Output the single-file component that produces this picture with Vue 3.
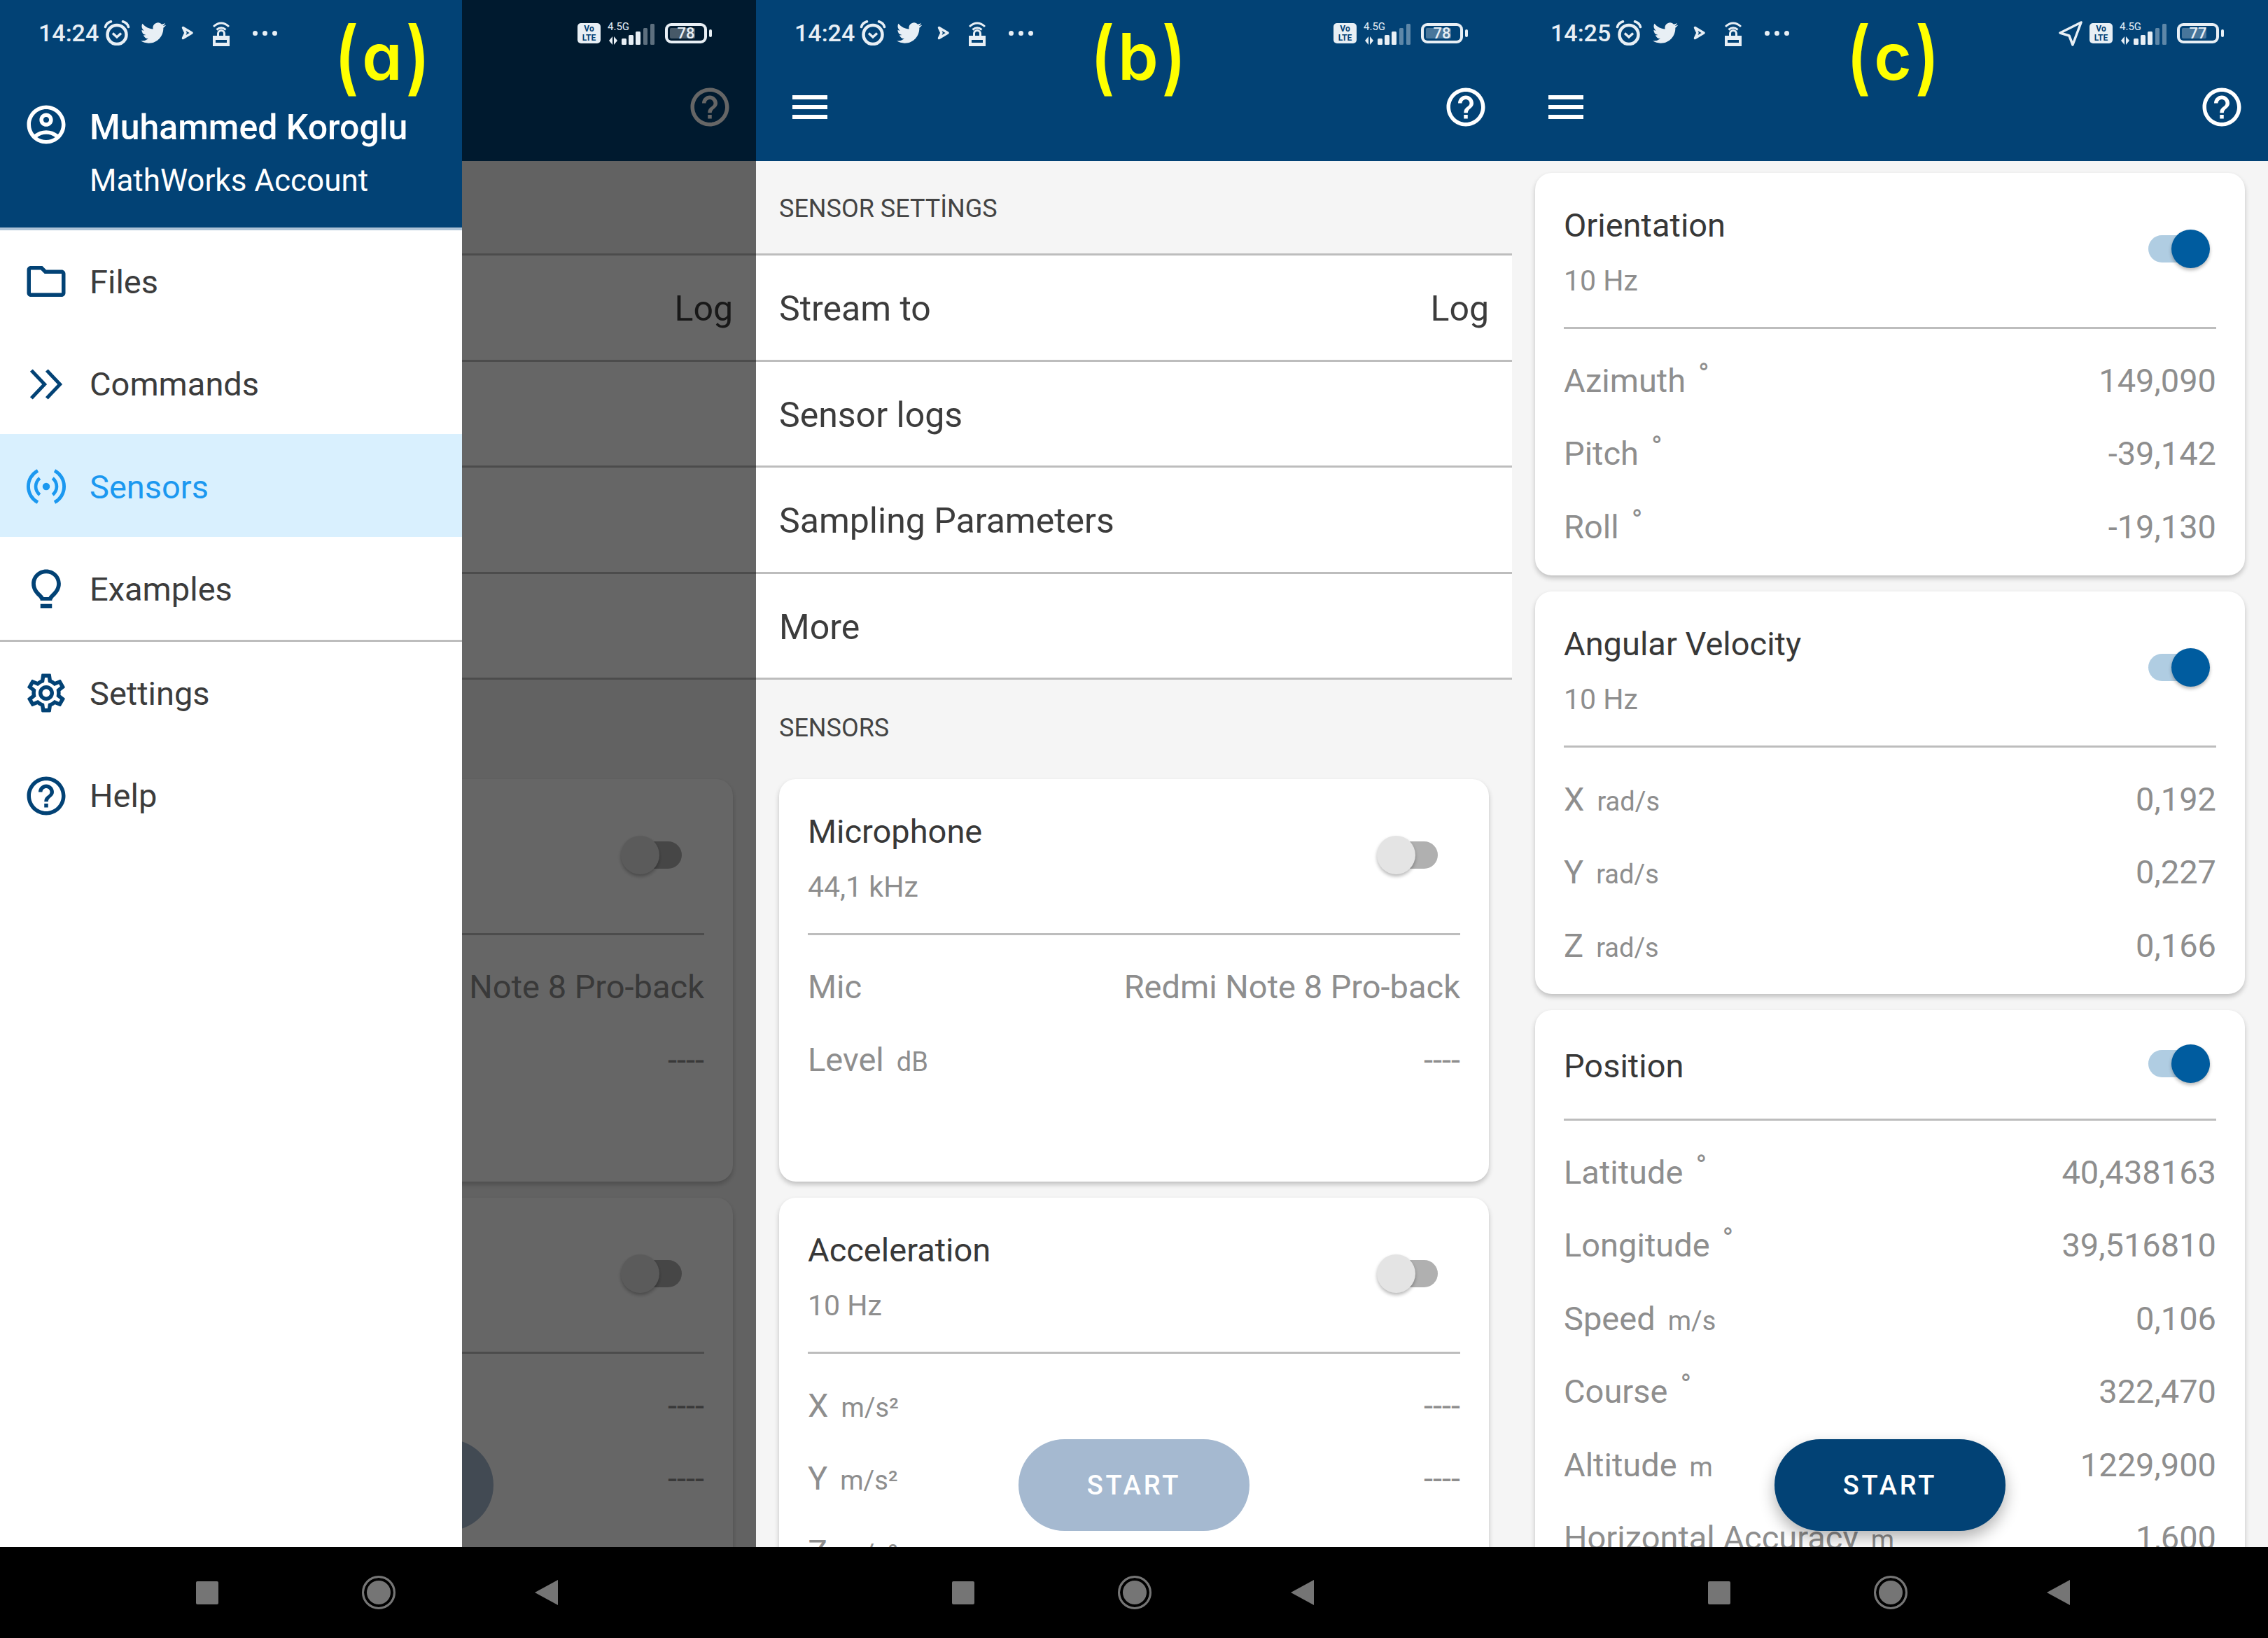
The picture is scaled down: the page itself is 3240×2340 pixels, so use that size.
<script setup>
const help = 'M11 18h2v-2h-2v2zm1-16C6.48 2 2 6.48 2 12s4.48 10 10 10 10-4.48 10-10S17.52 2 12 2zm0 18c-4.41 0-8-3.59-8-8s3.59-8 8-8 8 3.59 8 8-3.59 8-8 8zm0-14c-2.21 0-4 1.79-4 4h2c0-1.1.9-2 2-2s2 .9 2 2c0 2-3 1.75-3 5h2c0-2.25 3-2.5 3-5 0-2.21-1.79-4-4-4z'
const account = 'M12 2C6.48 2 2 6.48 2 12s4.48 10 10 10 10-4.48 10-10S17.52 2 12 2zM7.35 18.5C8.66 17.56 10.26 17 12 17s3.34.56 4.65 1.5c-1.31.94-2.91 1.5-4.65 1.5s-3.34-.56-4.65-1.5zm10.79-1.38C16.45 15.8 14.32 15 12 15s-4.45.8-6.14 2.12C4.7 15.73 4 13.95 4 12c0-4.42 3.58-8 8-8s8 3.58 8 8c0 1.95-.7 3.73-1.86 5.12zM12 6c-1.93 0-3.5 1.57-3.5 3.5S10.07 13 12 13s3.5-1.57 3.5-3.5S13.93 6 12 6zm0 5c-.83 0-1.5-.67-1.5-1.5S11.17 8 12 8s1.5.67 1.5 1.5S12.83 11 12 11z'
const twitter = 'M23.953 4.57a10 10 0 01-2.825.775 4.958 4.958 0 002.163-2.723c-.951.555-2.005.959-3.127 1.184a4.92 4.92 0 00-8.384 4.482C7.69 8.095 4.067 6.13 1.64 3.162a4.822 4.822 0 00-.666 2.475c0 1.71.87 3.213 2.188 4.096a4.904 4.904 0 01-2.228-.616v.06a4.923 4.923 0 003.946 4.827 4.996 4.996 0 01-2.212.085 4.936 4.936 0 004.604 3.417 9.867 9.867 0 01-6.102 2.105c-.39 0-.779-.023-1.17-.067a13.995 13.995 0 007.557 2.209c9.053 0 13.998-7.496 13.998-13.985 0-.21 0-.42-.015-.63A9.935 9.935 0 0024 4.59z'

const menu = [
  { label: 'Files', d: 'M9.17 6l2 2H20v10H4V6h5.17M10 4H4c-1.1 0-1.99.9-1.99 2L2 18c0 1.1.9 2 2 2h16c1.1 0 2-.9 2-2V8c0-1.1-.9-2-2-2h-8l-2-2z' },
  { label: 'Commands', d: 'M5 4.2L3.6 5.4 9.9 12l-6.300 6.600L5 19.800 12.400 12zM13 4.200l-1.400 1.200 6.300 6.600-6.300 6.600 1.400 1.200 7.400-7.800z' },
  { label: 'Sensors', active: true, d: 'M7.21 3A10.2 10.2 0 0 0 7.21 21L8.06 19.42A8.4 8.4 0 0 1 8.06 4.58zM16.79 3A10.2 10.2 0 0 1 16.79 21L15.94 19.42A8.4 8.4 0 0 0 15.94 4.58zM8.12 7.04A6.3 6.3 0 0 0 8.12 16.96L9.17 15.62A4.6 4.6 0 0 1 9.17 8.38zM15.88 7.04A6.3 6.3 0 0 1 15.88 16.96L14.83 15.62A4.6 4.6 0 0 0 14.83 8.38zM12 10.1a1.9 1.9 0 1 0 0 3.8a1.9 1.9 0 1 0 0-3.8z' },
  { label: 'Examples', divider: true, d: 'M12 1.600c-4.200 0-7.600 3.300-7.600 7.400 0 2.900 1.500 5 3.200 6.600.900.800 1.400 1.500 1.400 2.200h6c0-.700.500-1.400 1.400-2.200 1.700-1.600 3.200-3.700 3.200-6.600 0-4.100-3.400-7.400-7.600-7.400zm0 2.100c3.100 0 5.500 2.300 5.500 5.300 0 2.100-1.100 3.700-2.600 5.100-.700.700-1.300 1.300-1.600 1.900h-2.600c-.300-.600-.900-1.200-1.600-1.900C7.600 12.700 6.500 11.100 6.500 9c0-3 2.400-5.300 5.500-5.300zM9 19.500h6v2.300H9z' },
  { label: 'Settings', d: 'M19.43 12.98c.04-.32.07-.64.07-.98 0-.34-.03-.66-.07-.98l2.11-1.65c.19-.15.24-.42.12-.64l-2-3.46c-.09-.16-.26-.25-.44-.25-.06 0-.12.01-.17.03l-2.49 1c-.52-.4-1.08-.73-1.69-.98l-.38-2.65C14.46 2.18 14.25 2 14 2h-4c-.25 0-.46.18-.49.42l-.38 2.65c-.61.25-1.17.59-1.69.98l-2.49-1c-.06-.02-.12-.03-.18-.03-.17 0-.34.09-.43.25l-2 3.46c-.13.22-.07.49.12.64l2.11 1.65c-.04.32-.07.65-.07.98 0 .33.03.66.07.98l-2.11 1.65c-.19.15-.24.42-.12.64l2 3.46c.09.16.26.25.44.25.06 0 .12-.01.17-.03l2.49-1c.52.4 1.08.73 1.69.98l.38 2.65c.03.24.24.42.49.42h4c.25 0 .46-.18.49-.42l.38-2.65c.61-.25 1.17-.59 1.69-.98l2.49 1c.06.02.12.03.18.03.17 0 .34-.09.43-.25l2-3.46c.12-.22.07-.49-.12-.64l-2.11-1.65zm-1.98-1.71c.04.31.05.52.05.73 0 .21-.02.43-.05.73l-.14 1.13.89.7 1.08.84-.7 1.21-1.27-.51-1.04-.42-.9.68c-.43.32-.84.56-1.25.73l-1.06.43-.16 1.13-.2 1.35h-1.4l-.19-1.35-.16-1.13-1.06-.43c-.43-.18-.83-.41-1.23-.71l-.91-.7-1.06.43-1.27.51-.7-1.21 1.08-.84.89-.7-.14-1.13c-.03-.31-.05-.54-.05-.74s.02-.43.05-.73l.14-1.13-.89-.7-1.08-.84.7-1.21 1.27.51 1.04.42.9-.68c.43-.32.84-.56 1.25-.73l1.06-.43.16-1.13.2-1.35h1.39l.19 1.35.16 1.13 1.06.43c.43.18.83.41 1.23.71l.91.7 1.06-.43 1.27-.51.7 1.21-1.07.85-.89.7.14 1.13zM12 8c-2.21 0-4 1.79-4 4s1.79 4 4 4 4-1.79 4-4-1.79-4-4-4zm0 6c-1.1 0-2-.9-2-2s.9-2 2-2 2 .9 2 2-.9 2-2 2z' },
  { label: 'Help', d: help }
]

const settings = [
  { label: 'Stream to', value: 'Log' },
  { label: 'Sensor logs' },
  { label: 'Sampling Parameters' },
  { label: 'More' }
]

const offCards = [
  {
    title: 'Microphone',
    sub: '44,1 kHz',
    on: false,
    rows: [
      { label: 'Mic', value: 'Redmi Note 8 Pro-back' },
      { label: 'Level', unit: 'dB', value: '----' }
    ]
  },
  {
    title: 'Acceleration',
    sub: '10 Hz',
    on: false,
    rows: [
      { label: 'X', unit: 'm/s²', value: '----' },
      { label: 'Y', unit: 'm/s²', value: '----' },
      { label: 'Z', unit: 'm/s²', value: '----' }
    ]
  }
]

const onCards = [
  {
    title: 'Orientation',
    sub: '10 Hz',
    on: true,
    rows: [
      { label: 'Azimuth', unit: '°', value: '149,090' },
      { label: 'Pitch', unit: '°', value: '-39,142' },
      { label: 'Roll', unit: '°', value: '-19,130' }
    ]
  },
  {
    title: 'Angular Velocity',
    sub: '10 Hz',
    on: true,
    rows: [
      { label: 'X', unit: 'rad/s', value: '0,192' },
      { label: 'Y', unit: 'rad/s', value: '0,227' },
      { label: 'Z', unit: 'rad/s', value: '0,166' }
    ]
  },
  {
    title: 'Position',
    on: true,
    rows: [
      { label: 'Latitude', unit: '°', value: '40,438163' },
      { label: 'Longitude', unit: '°', value: '39,516810' },
      { label: 'Speed', unit: 'm/s', value: '0,106' },
      { label: 'Course', unit: '°', value: '322,470' },
      { label: 'Altitude', unit: 'm', value: '1229,900' },
      { label: 'Horizontal Accuracy', unit: 'm', value: '1,600' }
    ]
  }
]

const panels = [
  { id: 'a', time: '14:24', battery: 78, drawer: true, settings, cards: offCards, running: false },
  { id: 'b', time: '14:24', battery: 78, settings, cards: offCards, running: false },
  { id: 'c', time: '14:25', battery: 77, location: true, settings: [], cards: onCards, running: true }
]
</script>

<template>
  <div class="shots">
    <div v-for="p in panels" :key="p.id" class="phone">
      <div class="screen">
        <header class="appbar">
          <svg class="burger" viewBox="0 0 50 34"><path d="M0 0h50v6H0zM0 14h50v6H0zM0 28h50v6H0z" /></svg>
          <svg class="icon" viewBox="0 0 24 24"><path :d="help" /></svg>
        </header>

        <main class="content" :class="{ tight: !p.settings.length }">
          <template v-if="p.settings.length">
            <div class="section first">SENSOR SETTİNGS</div>
            <div v-for="s in p.settings" :key="s.label" class="setting">
              <span>{{ s.label }}</span>
              <span v-if="s.value">{{ s.value }}</span>
            </div>
            <div class="section">SENSORS</div>
          </template>

          <section v-for="c in p.cards" :key="c.title" class="card">
            <div class="card-head" :class="{ single: !c.sub }">
              <div class="card-titles">
                <div class="card-title">{{ c.title }}</div>
                <div v-if="c.sub" class="card-sub">{{ c.sub }}</div>
              </div>
              <div class="toggle" :class="{ on: c.on }">
                <span class="track"></span>
                <span class="thumb"></span>
              </div>
            </div>
            <div class="card-rule"></div>
            <div class="rows">
              <div v-for="r in c.rows" :key="r.label" class="row">
                <span class="row-label">{{ r.label }}<small v-if="r.unit" :class="{ deg: r.unit === '°' }">{{ r.unit }}</small></span>
                <span>{{ r.value }}</span>
              </div>
            </div>
          </section>
        </main>

        <button class="fab" :class="{ running: p.running }">START</button>

        <template v-if="p.drawer">
          <div class="scrim"></div>
          <aside class="drawer">
            <div class="drawer-head">
              <div class="drawer-user">
                <svg class="icon" viewBox="0 0 24 24"><path :d="account" /></svg>
                <span>Muhammed Koroglu</span>
              </div>
              <div class="drawer-account">MathWorks Account</div>
            </div>
            <nav class="drawer-nav">
              <div v-for="m in menu" :key="m.label" class="drawer-wrap" :class="{ divided: m.divider }">
                <div class="drawer-item" :class="{ active: m.active }">
                  <svg class="icon" viewBox="0 0 24 24"><path :d="m.d" /></svg>
                  <span>{{ m.label }}</span>
                </div>
              </div>
            </nav>
          </aside>
        </template>

        <div class="status">
          <span class="time">{{ p.time }}</span>
          <svg class="st-alarm" viewBox="0 0 38 36" fill="none" stroke="currentColor">
            <circle cx="19" cy="20.500" r="13.500" stroke-width="4.500" />
            <path d="M2.500 9.500C3.500 5.500 6.500 3 10.500 1.800M35.500 9.500C34.500 5.500 31.500 3 27.500 1.800" stroke-width="3.500" stroke-linecap="round" />
            <path d="M13 18.500l6 5.500 6-5.500" stroke-width="3.500" />
          </svg>
          <svg class="st-bird" viewBox="0 0 24 24"><path :d="twitter" /></svg>
          <svg class="st-play" viewBox="0 0 18 20" fill="none" stroke="currentColor">
            <path d="M2.500 2.500L15 10 2.500 17.500 6 10z" stroke-width="3.500" stroke-linejoin="round" />
          </svg>
          <svg class="st-lock" viewBox="0 0 26 37" fill="none" stroke="currentColor">
            <path d="M2 9Q13-1 24 9M6.500 13.500Q13 8 19.500 13.500" stroke-width="3" />
            <path d="M8.500 22v-3a4.500 4.500 0 0 1 9 0v3" stroke-width="3" />
            <path d="M1 22h24v15H1zM5 28v4h16v-4z" fill="currentColor" stroke="none" fill-rule="evenodd" />
          </svg>
          <span class="st-dots"><i></i><i></i><i></i></span>

          <span class="st-right">
            <svg v-if="p.location" class="st-nav" viewBox="0 0 36 37" fill="none" stroke="currentColor">
              <path d="M33 3L3 18l13 4 5 13z" stroke-width="3.500" stroke-linejoin="round" />
            </svg>
            <span class="volte">Vo<br />LTE</span>
            <svg class="st-signal" viewBox="0 0 68 34">
              <text x="0" y="13" class="net">4.5G</text>
              <path d="M2 28l5-6v12zM9 22l5 6-5 6z" fill="currentColor" />
              <rect x="20" y="25" width="7" height="9" rx="1.500" fill="currentColor" />
              <rect x="30" y="20" width="7" height="14" rx="1.500" fill="currentColor" />
              <rect x="40" y="15" width="7" height="19" rx="1.500" fill="currentColor" />
              <rect x="51" y="10" width="6" height="24" rx="1.500" fill="currentColor" opacity="0.4" />
              <rect x="61" y="4" width="6" height="30" rx="1.500" fill="currentColor" opacity="0.4" />
            </svg>
            <span class="battery">
              <span class="battery-fill" :style="{ width: p.battery + '%' }"></span>
              <span class="battery-num">{{ p.battery }}</span>
            </span>
            <span class="battery-tip"></span>
          </span>
        </div>

        <div class="tag"><span class="paren">(</span>{{ p.id }}<span class="paren">)</span></div>
      </div>

      <footer class="navbar">
        <span class="nav-square"></span>
        <span class="nav-home"></span>
        <span class="nav-back"></span>
      </footer>
    </div>
  </div>
</template>

<style>
body {
  margin: 0;
  background: #000;
}
</style>

<style scoped>
.shots {
  display: flex;
  width: 3240px;
  height: 2340px;
  font-family: Roboto, "Liberation Sans", sans-serif;
}

.phone {
  width: 1080px;
  height: 2340px;
  display: flex;
  flex-direction: column;
}

.screen {
  position: relative;
  flex: 1;
  overflow: hidden;
  background: #f5f5f5;
}

.appbar {
  height: 230px;
  box-sizing: border-box;
  padding: 76px 33px 0 52px;
  display: flex;
  align-items: center;
  justify-content: space-between;
  background: #024275;
  color: #fff;
}

.burger {
  width: 50px;
  height: 34px;
  fill: currentColor;
}

.icon {
  width: 66px;
  height: 66px;
  flex: none;
  fill: currentColor;
}

.content.tight {
  padding-top: 17px;
}

.section {
  height: 142px;
  padding-bottom: 4px;
  box-sizing: border-box;
  display: flex;
  align-items: center;
  padding-left: 33px;
  font-size: 36px;
  color: #444;
}

.section.first {
  height: 135px;
  padding-top: 4px;
  padding-bottom: 0;
  border-bottom: 3px solid #bdbdbd;
}

.setting {
  height: 151.500px;
  box-sizing: border-box;
  padding: 4px 33px 0;
  display: flex;
  align-items: center;
  justify-content: space-between;
  background: #fff;
  border-bottom: 3px solid #bdbdbd;
  font-size: 50px;
  color: #3c3c3c;
}

.card {
  margin: 0 33px 23px;
  min-height: 575px;
  border-radius: 24px;
  background: #fff;
  box-shadow: 0 4px 7px rgba(0, 0, 0, 0.22);
}

.card-head {
  height: 220px;
  padding: 0 50px 0 41px;
  display: flex;
  align-items: center;
  justify-content: space-between;
}

.card-head.single {
  height: 155px;
}

.card-titles {
  display: flex;
  flex-direction: column;
  gap: 19px;
  padding-top: 8px;
}

.card-head.single .card-titles {
  padding-top: 5px;
}

.card-title {
  line-height: 60px;
  font-size: 47px;
  color: #383838;
}

.card-sub {
  line-height: 60px;
  font-size: 41px;
  color: #8e8e8e;
}

.toggle {
  position: relative;
  width: 110px;
  height: 55px;
  margin-top: -3px;
}

.track {
  position: absolute;
  left: 22px;
  top: 8px;
  width: 65px;
  height: 39px;
  border-radius: 20px;
  background: #b0b0b0;
}

.thumb {
  position: absolute;
  left: 0;
  top: 0;
  width: 55px;
  height: 55px;
  border-radius: 50%;
  background: #e4e4e4;
  box-shadow: 0 3px 5px rgba(0, 0, 0, 0.28);
}

.toggle.on .track {
  background: #b0cde2;
}

.toggle.on .thumb {
  left: 55px;
  background: #005c9f;
}

.card-rule {
  height: 3px;
  margin: 0 41px;
  background: #bdbdbd;
}

.rows {
  padding: 21px 41px 15px;
}

.row {
  height: 104.500px;
  display: flex;
  align-items: center;
  justify-content: space-between;
  font-size: 47px;
  color: #8e8e8e;
}

.row-label small {
  margin-left: 18px;
  font-size: 38px;
}

.row-label small.deg {
  position: relative;
  top: -11px;
  font-size: 42px;
}

.fab {
  position: absolute;
  left: 375px;
  top: 2056px;
  width: 330px;
  height: 131px;
  padding: 0;
  border: none;
  border-radius: 66px;
  background: #a5b9d0;
  color: #fff;
  font-family: inherit;
  font-size: 38px;
  font-weight: 500;
  letter-spacing: 3.800px;
}

.fab.running {
  background: #024275;
  box-shadow: 0 10px 22px rgba(0, 0, 0, 0.3);
}

.scrim {
  position: absolute;
  inset: 0;
  background: rgba(0, 0, 0, 0.6);
}

.drawer {
  position: absolute;
  left: 0;
  top: 0;
  bottom: 0;
  width: 660px;
  background: #fff;
}

.drawer-head {
  height: 325px;
  box-sizing: border-box;
  padding-top: 147px;
  background: #024275;
  color: #fff;
  box-shadow: 0 4px 0 #adc2d6;
}

.drawer-user {
  height: 70px;
  padding-left: 33px;
  display: flex;
  align-items: center;
  gap: 29px;
  font-size: 50px;
  font-weight: 500;
}

.drawer-user .icon {
  margin-top: -8px;
}

.drawer-account {
  margin: 6px 0 0 128px;
  line-height: 70px;
  font-size: 44px;
}

.drawer-nav {
  padding-top: 2px;
}

.drawer-wrap.divided {
  border-bottom: 3px solid #bdbdbd;
  padding-bottom: 1px;
  margin-bottom: -2px;
}

.drawer-item {
  height: 146.500px;
  box-sizing: border-box;
  padding: 4px 0 0 33px;
  display: flex;
  align-items: center;
  gap: 29px;
  font-size: 47px;
  color: #3c3c3c;
}

.drawer-item .icon {
  color: #024275;
}

.drawer-item.active {
  background: #d9f0fe;
  color: #1b98f0;
}

.drawer-item.active .icon {
  color: #1b98f0;
}

.status {
  position: absolute;
  left: 0;
  right: 0;
  top: 0;
  height: 94px;
  box-sizing: border-box;
  padding: 0 63px 0 55px;
  display: flex;
  align-items: center;
  color: #e8eff5;
}

.time {
  width: 85px;
  font-size: 34px;
  font-weight: 500;
  white-space: nowrap;
}

.status svg {
  flex: none;
}

.st-alarm {
  width: 38px;
  height: 36px;
  margin-left: 8px;
}

.st-bird {
  width: 36px;
  height: 36px;
  margin-left: 15px;
  fill: currentColor;
}

.st-play {
  width: 18px;
  height: 20px;
  margin-left: 22px;
}

.st-lock {
  width: 26px;
  height: 37px;
  margin-left: 26px;
}

.st-dots {
  margin-left: 32px;
  display: flex;
  gap: 7px;
}

.st-dots i {
  width: 7px;
  height: 7px;
  border-radius: 50%;
  background: currentColor;
}

.st-right {
  margin-left: auto;
  display: flex;
  align-items: center;
}

.st-nav {
  width: 36px;
  height: 37px;
  margin-right: 9px;
}

.volte {
  width: 33px;
  height: 29px;
  border-radius: 5px;
  background: #e8eff5;
  color: #024275;
  font-size: 12px;
  font-weight: 700;
  line-height: 13px;
  text-align: center;
  padding-top: 2px;
  box-sizing: border-box;
}

.st-signal {
  width: 68px;
  height: 34px;
  margin-left: 10px;
}

.net {
  font-size: 15px;
  fill: currentColor;
}

.battery {
  position: relative;
  width: 60px;
  height: 29px;
  margin-left: 14px;
  padding: 3px;
  box-sizing: border-box;
  border: 4px solid currentColor;
  border-radius: 9px;
  display: block;
}

.battery-fill {
  display: block;
  height: 100%;
  border-radius: 2px;
  background: rgba(255, 255, 255, 0.28);
}

.battery-num {
  position: absolute;
  inset: 0;
  text-align: center;
  line-height: 21px;
  font-size: 22px;
  font-weight: 500;
}

.battery-tip {
  width: 4px;
  height: 11px;
  margin-left: 3px;
  border-radius: 2px;
  background: currentColor;
}

.tag {
  position: absolute;
  left: 478px;
  top: 28px;
  width: 134px;
  line-height: 105px;
  text-align: center;
  white-space: nowrap;
  color: #ffff00;
  font-family: Inter, "Liberation Sans", sans-serif;
  font-size: 92px;
  font-weight: 600;
  font-feature-settings: "cv11";
  letter-spacing: 5px;
}

.paren {
  display: inline-block;
  transform: scaleY(1.25);
  transform-origin: center;
}

.navbar {
  height: 130px;
  flex: none;
  padding-left: 280px;
  display: flex;
  align-items: center;
  gap: 202px;
  background: #000;
}

.nav-square {
  width: 32px;
  height: 33px;
  border-radius: 2px;
  background: #757575;
}

.nav-home {
  width: 48px;
  height: 48px;
  box-sizing: border-box;
  margin: 0 -3px 0 3px;
  border: 3px solid #757575;
  border-radius: 50%;
  background: #757575;
  box-shadow: inset 0 0 0 4px #000;
}

.nav-back {
  width: 0;
  height: 0;
  border-style: solid;
  border-width: 18px 33px 18px 0;
  border-color: transparent #757575 transparent transparent;
}
</style>
